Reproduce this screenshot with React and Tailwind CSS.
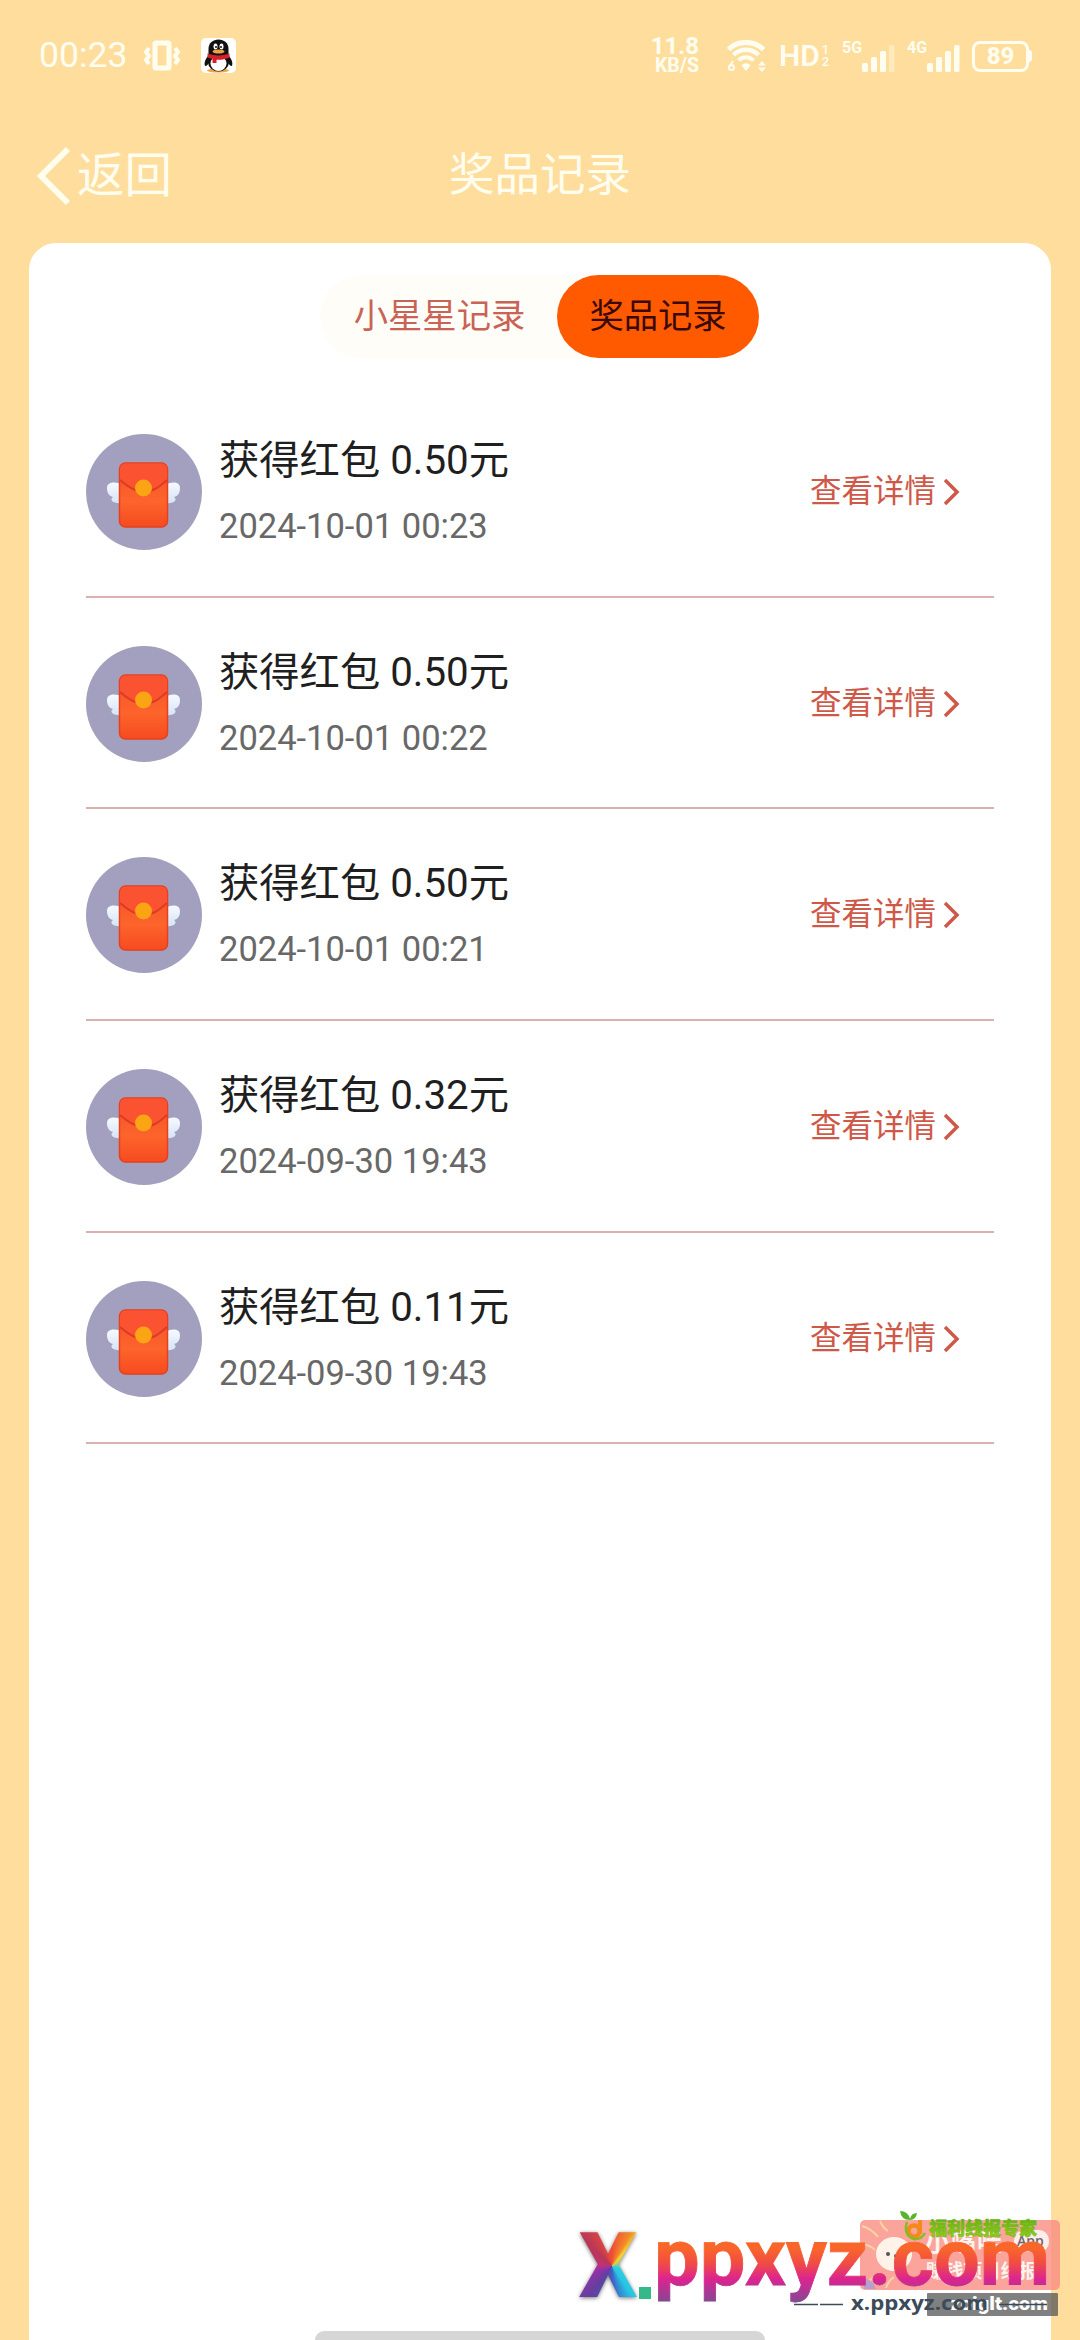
import React from 'react';

const records = [
    { id: 1, amount: '0.50', time: '2024-10-01 00:23' },
    { id: 2, amount: '0.50', time: '2024-10-01 00:22' },
    { id: 3, amount: '0.50', time: '2024-10-01 00:21' },
    { id: 4, amount: '0.32', time: '2024-09-30 19:43' },
    { id: 5, amount: '0.11', time: '2024-09-30 19:43' }
];

const VibrateIcon = () => (
    <svg className="w-[38px] h-8" viewBox="0 0 38 32" fill="none" stroke="currentColor">
        <rect x="12" y="3" width="14" height="25" rx="1" strokeWidth="5" />
        <path d="M6 8l-3 4 3 4-3 4 3 4M32 8l3 4-3 4 3 4-3 4" strokeWidth="4" />
    </svg>
);

const PenguinIcon = () => (
    <svg className="w-[35px] h-[35px]" viewBox="0 0 35 35">
        <rect width="35" height="35" rx="5" fill="#fff" />
        <ellipse cx="17" cy="32.5" rx="11" ry="2" fill="#e9a84b" />
        <path d="M8 17C4 21 3 25 4 28c2 0 3-2 4-3zM27 17c4 4 5 8 4 11-2 0-3-2-4-3z" fill="#111" />
        <ellipse cx="17.5" cy="24" rx="10.5" ry="9.5" fill="#111" />
        <ellipse cx="17.5" cy="25.5" rx="8" ry="7.5" fill="#fff" />
        <path d="M7.500 17V11C7.500 5 12 1.500 17.500 1.500S27.500 5 27.500 11v6z" fill="#111" />
        <ellipse cx="14.500" cy="8.500" rx="2" ry="3" fill="#fff" />
        <ellipse cx="20.500" cy="8.500" rx="2" ry="3" fill="#fff" />
        <circle cx="15" cy="9" r="1" fill="#111" />
        <circle cx="20" cy="9" r="1" fill="#111" />
        <ellipse cx="17.500" cy="13.500" rx="6" ry="2" fill="#e9a24a" />
        <path d="M6.500 15.500c7 2.500 15 2.500 22 0v4c-4 2-9 2.500-13 2.200V25h-4v-4.200c-2-.4-4-.8-5-1.300z" fill="#d5202c" />
    </svg>
);

const WifiIcon = () => (
    <svg className="w-10 h-8" viewBox="0 0 40 32" fill="none" stroke="currentColor">
        <path d="M2.500 9.500C12 0 28 0 37.500 9.500" strokeWidth="5" />
        <path d="M7.500 15c7-7 18-7 25 0" strokeWidth="4.500" />
        <path d="M12.500 20.500c4-4.500 11-4.500 15 0" strokeWidth="4" />
        <path d="M15.500 25.500c2.500-3 6.500-3 9 0L20 31z" fill="currentColor" stroke="none" />
        <path d="M7 21l-3 5" strokeWidth="2" />
        <circle cx="5.500" cy="27.500" r="2.500" strokeWidth="2" />
        <path d="M32 25.500l4-4.500 4 4.500zM32 27.500l4 4.500 4-4.500z" fill="currentColor" stroke="none" />
    </svg>
);

const SignalIcon = ({ weak }) => (
    <svg className="w-[33px] h-[27px]" viewBox="0 0 33 27" fill="currentColor">
        <rect x="0" y="18" width="6" height="9" rx="1.500" />
        <rect x="9" y="12" width="6" height="15" rx="1.500" />
        <rect x="18" y="6" width="6" height="21" rx="1.500" />
        <rect x="27" y="0" width="5.500" height="27" rx="1.500" opacity={weak ? 0.4 : 1} />
    </svg>
);

const MobileSignal = ({ label, weak }) => (
    <div className="ml-3 flex h-8 w-[53px] items-end">
        <span className="w-5 self-start whitespace-nowrap text-[16px] font-bold leading-none">{label}</span>
        <SignalIcon weak={weak} />
    </div>
);

const StatusBar = () => (
    <div className="flex h-[112px] items-center pl-[39px] pr-[48px] text-[#fffdf0]">
        <span className="w-[104px] text-[35.5px] leading-none">00:23</span>
        <VibrateIcon />
        <div className="ml-[20px] mb-0.5">
            <PenguinIcon />
        </div>
        <div className="ml-auto flex items-center">
            <div className="flex w-[50px] flex-col items-end text-[19.5px] font-bold leading-[19px]">
                <span className="text-[24px]">11.8</span>
                <span>KB/S</span>
            </div>
            <div className="ml-[27px]">
                <WifiIcon />
            </div>
            <span className="ml-[13px] w-[42px] whitespace-nowrap text-[30px] font-semibold leading-none">HD</span>
            <div className="flex w-[9px] flex-col items-center text-[13px] font-medium leading-[12px]">
                <span>1</span>
                <span>2</span>
            </div>
            <MobileSignal label="5G" weak />
            <MobileSignal label="4G" />
            <div className="ml-3 flex items-center">
                <div className="flex h-[31px] w-[57px] items-center justify-center rounded-[8px] border-[3px] border-current text-[24px] font-extrabold leading-none">
                    89
                </div>
                <div className="h-3 w-[3px] rounded-r bg-current" />
            </div>
        </div>
    </div>
);

// Red packet with wings inside a round badge
const RedPacketAvatar = () => (
    <svg className="h-[116px] w-[116px] shrink-0" viewBox="0 0 116 116">
        <defs>
            <linearGradient id="packet" x1="0" y1="0" x2="0" y2="1">
                <stop offset="0" stopColor="#f4502b" />
                <stop offset="0.6" stopColor="#fd642b" />
                <stop offset="1" stopColor="#f64b20" />
            </linearGradient>
            <linearGradient id="wing" x1="0" y1="0" x2="0" y2="1">
                <stop offset="0" stopColor="#f5faff" />
                <stop offset="1" stopColor="#d5e4f5" />
            </linearGradient>
        </defs>
        <circle cx="58" cy="58" r="58" fill="#a39fbf" />
        <g fill="url(#wing)">
            <path d="M36 51c-6-4-15-3-15 3 0 5 2 8 6 9-4 3 0 7 9 6z" />
            <path d="M80 51c6-4 14-3 14 3 0 5-2 8-6 9 4 3 0 7-8 6z" />
        </g>
        <rect x="33.500" y="29" width="48" height="64" rx="6" fill="url(#packet)" stroke="#e5401f" strokeWidth="1.500" />
        <path d="M34 46V36c0-4 2-6.500 6-6.500h35c4 0 6 2.500 6 6.500v10C72 54 66 58 58 58s-15-4-24-12z" fill="#fb5332" />
        <path d="M34 46c9 8 16 12 24 12s14-4 23-12" fill="none" stroke="#dc3d22" strokeWidth="2" />
        <circle cx="57.500" cy="54" r="8.500" fill="#fba414" />
    </svg>
);

const RecordRow = ({ record }) => (
    <div className="flex h-[211.7px] items-start border-b-2 border-[#dbb0ae] pt-[48px]">
        <RedPacketAvatar />
        <div className="ml-[17px] flex flex-1 flex-col">
            <span className="mt-[1px] text-[40.3px] leading-[52px] text-[#1f1f1f]">获得红包 {record.amount}元</span>
            <span className="mt-[17px] text-[34.5px] leading-[44px] text-[#686868]">{record.time}</span>
        </div>
        <button className="mr-[33px] mt-[35px] flex items-center text-[31.5px] leading-[46px] text-[#cf5949]">
            查看详情
            <svg className="ml-[7px] h-7 w-[18px]" viewBox="0 0 18 28" fill="none" stroke="currentColor" strokeWidth="3.500">
                <path d="M2 2l12 12L2 26" />
            </svg>
        </button>
    </div>
);

// Promo stamps laid over the lower right corner
const Watermark = () => (
    <div className="absolute bottom-0 right-0 h-[150px] w-[520px]">
        <svg className="h-full w-full" viewBox="560 2190 520 150">
            <defs>
                <linearGradient id="brand" gradientUnits="userSpaceOnUse" x1="0" y1="2242" x2="0" y2="2304">
                    <stop offset="0.1" stopColor="#f9662a" />
                    <stop offset="0.35" stopColor="#f04b45" />
                    <stop offset="0.6" stopColor="#db2490" />
                    <stop offset="1" stopColor="#7c4b94" />
                </linearGradient>
                <linearGradient id="leaf" x1="0" y1="0" x2="0" y2="1">
                    <stop offset="0" stopColor="#4fae13" />
                    <stop offset="1" stopColor="#a3cf1c" />
                </linearGradient>
            </defs>
            <rect x="860" y="2220" width="200" height="70" rx="5" fill="#f88b80" opacity="0.78" />
            <g fill="none" stroke="#fbd2a4" strokeWidth="2">
                <path d="M862 2226q10 3 16 11M880 2221q3 7 8 10M862 2244q8 1 13 6M866 2284q7-8 15-10M886 2288q2-7 8-11M922 2278q-4-2-8 0" />
            </g>
            <path d="M862 2278q10 0 14 11h-12z" fill="#b79fcb" />
            <ellipse cx="894" cy="2254" rx="18" ry="17" fill="#fff3e9" />
            <circle cx="888" cy="2254" r="2" fill="#555" />
            <circle cx="896" cy="2256" r="2" fill="#555" />
            <rect x="1014" y="2230" width="35" height="22" rx="10" fill="#fdeeea" />
            <g fontFamily="'Noto Sans CJK SC', sans-serif" fontWeight="700" fill="#fff4ef">
                <text x="925" y="2251" fontSize="25" textLength="77">小嘴哇</text>
                <text x="926" y="2278" fontSize="19" textLength="112">赚钱项目线报</text>
            </g>
            <text x="1017" y="2246" fontSize="14" fontWeight="600" fontFamily="'Open Sans', sans-serif" fill="#6d6574">App</text>
            <path d="M900 2211q8 0 10 8 1-6 7-6-1 7-7 7-9 0-10-9z" fill="#58b52a" />
            <circle cx="914" cy="2231" r="5.500" fill="none" stroke="#f58a1c" strokeWidth="4.500" />
            <path d="M920 2220v14" stroke="#f58a1c" strokeWidth="4" />
            <path d="M907 2222q-4 13 7 17 7 1 11-6" fill="none" stroke="#83bd20" strokeWidth="2.500" />
            <text
                x="929"
                y="2235"
                fontSize="18"
                fontWeight="900"
                textLength="108"
                fontFamily="'Noto Sans CJK SC', sans-serif"
                fill="url(#leaf)"
                stroke="#6fb918"
                strokeWidth="0.600"
            >
                福利线报专家
            </text>
            <rect x="927" y="2293" width="131" height="23" rx="1" fill="#555555" opacity="0.75" />
            <text x="950" y="2310" fontSize="18" fontWeight="900" textLength="98" lengthAdjust="spacingAndGlyphs" fontFamily="Roboto, sans-serif" fill="#fff">
                zoiglt.com
            </text>
            <path d="M794 2304.500h24M820 2304.500h23M999 2304.500h48" stroke="#3b4b59" strokeWidth="1.500" />
            <text x="851" y="2310" fontSize="20" fontWeight="700" textLength="137" lengthAdjust="spacingAndGlyphs" fontFamily="'Open Sans', sans-serif" fill="#3b4b59">
                x.ppxyz.com
            </text>
            <text
                x="654"
                y="2285"
                fontSize="79"
                fontWeight="700"
                textLength="396"
                lengthAdjust="spacingAndGlyphs"
                fontFamily="Roboto, sans-serif"
                fill="url(#brand)"
                stroke="url(#brand)"
                strokeWidth="0.800"
            >
                ppxyz.com
            </text>
            <rect x="639" y="2287" width="12" height="12" fill="#35b98b" />
        </svg>
        <span className="absolute left-[15px] top-[31px] h-[90px] w-[66px] bg-[conic-gradient(from_0deg_at_56%_50%,#ef4a37_0deg,#f28b28_30deg,#f4d02e_40deg,#2ed0dc_110deg,#25c8e4_145deg,#3e62c8_175deg,#60409f_215deg,#9c2fa9_255deg,#bd3571_275deg,#b93757_315deg,#ef4a37_350deg)] bg-clip-text text-center font-['Roboto'] text-[91px] font-black leading-[90px] text-transparent drop-shadow-[0_1px_2px_rgba(0,0,0,0.55)]">
            X
        </span>
    </div>
);

export default function App() {
    return (
        <div className="relative flex h-[2340px] w-[1080px] flex-col overflow-hidden bg-[#ffde9d] font-['Roboto','Noto_Sans_CJK_SC',sans-serif]">
            <StatusBar />

            {/* Nav bar */}
            <div className="grid h-[131px] grid-cols-3 items-center px-[36px] pb-[3px] text-[#fffdee]">
                <button className="flex items-center text-[47.5px] leading-[60px]">
                    <svg className="mr-[5px] h-[60px] w-[36px]" viewBox="0 0 36 60" fill="none" stroke="currentColor" strokeWidth="6">
                        <path d="M32 3L5 30l27 27" />
                    </svg>
                    返回
                </button>
                <h1 className="text-center text-[45.5px] leading-[60px]">奖品记录</h1>
            </div>

            <main className="mx-[29px] flex flex-1 flex-col rounded-t-[27px] bg-white pt-8">
                {/* Tabs */}
                <div className="ml-[291px] flex h-[83px] w-[439px] items-center rounded-full bg-[#fffdf7] text-[34.3px]">
                    <button className="flex-1 pl-[2px] text-center text-[#c96355]">小星星记录</button>
                    <button className="h-full w-[202px] rounded-full bg-[#ff5a00] text-[#3a0a0a]">奖品记录</button>
                </div>

                <div className="mx-[57px] mt-[28px]">
                    {records.map(record => (
                        <RecordRow key={record.id} record={record} />
                    ))}
                </div>
            </main>

            {/* Home gesture bar */}
            <div className="absolute bottom-0 left-[315px] h-[9px] w-[450px] rounded-t-full bg-[#d6d6d6]" />
            <Watermark />
        </div>
    );
}
